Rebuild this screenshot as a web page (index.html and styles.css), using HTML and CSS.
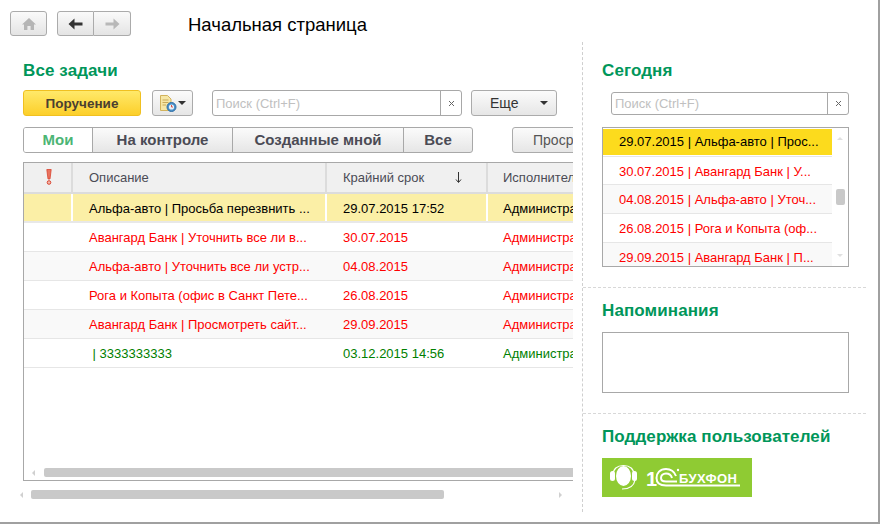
FILE: index.html
```html
<!DOCTYPE html>
<html lang="ru">
<head>
    <meta charset="UTF-8">
    <title>Начальная страница</title>
    <link rel="stylesheet" href="styles.css">
</head>
<body>
<div class="app">
    <div class="topbar">
        <button class="nav-btn home">
            <svg width="16" height="14" viewBox="0 0 16 14"><path d="M8 1 L15 7.5 H13 V13 H9.6 V9 H6.4 V13 H3 V7.5 H1 Z" fill="#b5b5b5"/></svg>
        </button>
        <div class="nav-group">
            <button class="nav-btn back">
                <svg width="15" height="12" viewBox="0 0 15 12"><path d="M6.5 0.5 V4.5 H14.5 V7.5 H6.5 V11.5 L0.5 6 Z" fill="#333"/></svg>
            </button>
            <button class="nav-btn fwd">
                <svg width="15" height="12" viewBox="0 0 15 12"><path d="M8.5 0.5 V4.5 H0.5 V7.5 H8.5 V11.5 L14.5 6 Z" fill="#b8b8b8"/></svg>
            </button>
        </div>
        <div class="page-title">Начальная страница</div>
    </div>

    <div class="main">
        <div class="left">
            <div class="left-inner">
                <h2 class="head">Все задачи</h2>
                <div class="toolbar">
                    <button class="btn primary">Поручение</button>
                    <button class="btn icon-btn">
                        <svg width="18" height="19" viewBox="0 0 18 19">
                            <path d="M1.5 1.5 H8.5 L12 5 V16.5 H1.5 Z" fill="#f6e7a6" stroke="#d2b35c"/>
                            <path d="M3.5 6 H9.5 M3.5 8.5 H9.5 M3.5 11 H7" stroke="#c9a95a"/>
                            <circle cx="12.5" cy="13" r="4.5" fill="#4a90c8" stroke="#2f6ea5"/>
                            <circle cx="12.5" cy="13" r="2.6" fill="#e8f2fa"/>
                            <path d="M12.5 11 V13 H14" fill="none" stroke="#d9534a"/>
                        </svg>
                        <span class="caret"></span>
                    </button>
                    <div class="search wide">
                        <span class="search-text">Поиск (Ctrl+F)</span>
                        <span class="search-x"><svg width="7" height="7" viewBox="0 0 7 7"><path d="M1 1 L6 6 M6 1 L1 6" stroke="#666"/></svg></span>
                    </div>
                    <button class="btn more"><span>Еще</span><span class="caret"></span></button>
                </div>
                <div class="filters">
                    <div class="tabs">
                        <div class="tab active t1">Мои</div>
                        <div class="tab t2">На контроле</div>
                        <div class="tab t3">Созданные мной</div>
                        <div class="tab t4">Все</div>
                    </div>
                    <button class="btn overdue">Просроченные</button>
                </div>
                <div class="table">
                    <div class="row header">
                        <div class="cell c1">
                            <svg class="mark" width="6" height="16" viewBox="0 0 6 16">
                                <path d="M0.8 0.5 H5.2 L4 10 H2 Z" fill="#e8735f" stroke="#d9432f" stroke-width="0.8"/>
                                <circle cx="3" cy="13.5" r="1.8" fill="#f4b9ac" stroke="#d9432f"/>
                            </svg>
                        </div>
                        <div class="cell c2">Описание</div>
                        <div class="cell c3 sort-cell">
                            <span>Крайний срок</span>
                            <svg class="sort" width="7" height="11" viewBox="0 0 7 11"><path d="M3.5 0 V10 M1 7.5 L3.5 10.5 L6 7.5" fill="none" stroke="#333"/></svg>
                        </div>
                        <div class="cell c4">Исполнитель</div>
                    </div>
                    <div class="row selected">
                        <div class="cell c1"></div>
                        <div class="cell c2">Альфа-авто | Просьба перезвнить ...</div>
                        <div class="cell c3">29.07.2015 17:52</div>
                        <div class="cell c4">Администратор</div>
                    </div>
                    <div class="row late">
                        <div class="cell c1"></div>
                        <div class="cell c2">Авангард Банк | Уточнить все ли в...</div>
                        <div class="cell c3">30.07.2015</div>
                        <div class="cell c4">Администратор</div>
                    </div>
                    <div class="row late alt">
                        <div class="cell c1"></div>
                        <div class="cell c2">Альфа-авто | Уточнить все ли устр...</div>
                        <div class="cell c3">04.08.2015</div>
                        <div class="cell c4">Администратор</div>
                    </div>
                    <div class="row late">
                        <div class="cell c1"></div>
                        <div class="cell c2">Рога и Копыта (офис в Санкт Пете...</div>
                        <div class="cell c3">26.08.2015</div>
                        <div class="cell c4">Администратор</div>
                    </div>
                    <div class="row late alt">
                        <div class="cell c1"></div>
                        <div class="cell c2">Авангард Банк | Просмотреть сайт...</div>
                        <div class="cell c3">29.09.2015</div>
                        <div class="cell c4">Администратор</div>
                    </div>
                    <div class="row future">
                        <div class="cell c1"></div>
                        <div class="cell c2">&nbsp;| 3333333333</div>
                        <div class="cell c3">03.12.2015 14:56</div>
                        <div class="cell c4">Администратор</div>
                    </div>
                    <div class="table-scroll">
                        <span class="arrow-l"></span>
                        <div class="thumb-h table-thumb"></div>
                    </div>
                </div>
            </div>
            <div class="outer-scroll">
                <span class="arrow-l"></span>
                <div class="thumb-h outer-thumb"></div>
                <span class="arrow-r"></span>
            </div>
        </div>

        <div class="right">
            <section class="block today">
                <h2 class="head">Сегодня</h2>
                <div class="search narrow">
                    <span class="search-text">Поиск (Ctrl+F)</span>
                    <span class="search-x"><svg width="7" height="7" viewBox="0 0 7 7"><path d="M1 1 L6 6 M6 1 L1 6" stroke="#666"/></svg></span>
                </div>
                <div class="list">
                    <div class="list-rows">
                        <div class="item current">29.07.2015 | Альфа-авто | Прос...</div>
                        <div class="item">30.07.2015 | Авангард Банк | У...</div>
                        <div class="item alt">04.08.2015 | Альфа-авто | Уточ...</div>
                        <div class="item">26.08.2015 | Рога и Копыта (оф...</div>
                        <div class="item alt">29.09.2015 | Авангард Банк | П...</div>
                    </div>
                    <div class="list-scroll">
                        <span class="arrow-u"></span>
                        <div class="thumb-v"></div>
                        <span class="arrow-d"></span>
                    </div>
                </div>
            </section>
            <section class="block reminders">
                <h2 class="head">Напоминания</h2>
                <div class="reminder-box"></div>
            </section>
            <section class="block support">
                <h2 class="head">Поддержка пользователей</h2>
                <svg class="buhfon" width="150" height="39" viewBox="0 0 150 39">
                    <rect width="150" height="39" fill="#8fcb33"/>
                    <ellipse cx="21.5" cy="18" rx="7.5" ry="10" fill="#fff"/>
                    <path d="M11 17 C11 11 15 7.5 21.5 7.5 C28 7.5 32 11 32 17" fill="none" stroke="#fff" stroke-width="1.2"/>
                    <rect x="8" y="13" width="5" height="10" rx="2.5" fill="#fff"/>
                    <rect x="30" y="13" width="5" height="10" rx="2.5" fill="#fff"/>
                    <path d="M33 22 C32 28 28 31 20 31" fill="none" stroke="#fff" stroke-width="1.2"/>
                    <text class="logo-one" x="44" y="28">1</text>
                    <path d="M74 18 C72 13 68 11 64 11 C58 11 54.5 15 54.5 20 C54.5 25 58 27.5 64 27.5 H138" fill="none" stroke="#fff" stroke-width="2"/>
                    <path d="M70 20 C69 16.5 67 15.5 64 15.5 C61 15.5 59 17.5 59 20 C59 22.5 61 23.5 64 23.5 H75" fill="none" stroke="#fff" stroke-width="2"/>
                    <circle cx="76" cy="12" r="1.2" fill="#fff"/>
                    <text class="logo-text" x="77" y="24.5">БУХФОН</text>
                </svg>
            </section>
        </div>
    </div>
</div>
</body>
</html>
```

FILE: styles.css
```css
* {
    margin: 0;
    padding: 0;
    box-sizing: border-box;
}

html, body {
    width: 100%;
    height: 100%;
    overflow: hidden;
    background-color: #fff;
}

body {
    font-family: "Liberation Sans", Arial, sans-serif;
    font-size: 13px;
}

button {
    font-family: inherit;
}

.app {
    width: 880px;
    height: 524px;
    border-right: 2px solid #a0a0a0;
    border-bottom: 2px solid #a0a0a0;
    display: flex;
    flex-direction: column;
}

/* top bar */
.topbar {
    height: 42px;
    padding: 11px 0 0 10px;
    display: flex;
    align-items: flex-start;
}

.nav-btn {
    height: 25px;
    border: 1px solid #ababab;
    border-radius: 3px;
    background: linear-gradient(#fafafa, #e4e4e4);
    display: flex;
    align-items: center;
    justify-content: center;
}

.home {
    width: 37px;
}

.nav-group {
    display: flex;
    margin-left: 10px;
}

.back, .fwd {
    width: 37px;
}

.back {
    border-radius: 3px 0 0 3px;
}

.fwd {
    border-left: 0;
    border-radius: 0 3px 3px 0;
}

.page-title {
    margin-left: 57px;
    font-size: 18.5px;
    line-height: 28px;
    color: #000;
}

/* columns */
.main {
    flex: 1;
    display: flex;
    align-items: flex-start;
    min-height: 0;
}

.left {
    width: 583px;
    height: 470px;
    border-right: 1px dashed #cfcfcf;
    padding-left: 23px;
}

.left-inner {
    width: 550px;
    overflow: hidden;
}

.head {
    font-size: 17px;
    font-weight: bold;
    line-height: 18px;
    color: #00965a;
    letter-spacing: 0.1px;
}

.left-inner .head {
    margin-top: 20px;
}

.toolbar {
    display: flex;
    margin-top: 10px;
    height: 26px;
}

.btn {
    height: 26px;
    border: 1px solid #ababab;
    border-radius: 3px;
    background: linear-gradient(#fbfbfb, #e6e6e6);
    font-size: 14px;
    color: #333;
    flex-shrink: 0;
}

.primary {
    width: 118px;
    font-size: 13.5px;
    border-color: #f0c020;
    background: linear-gradient(#ffe96a, #fccf2a);
    font-weight: bold;
    color: #4a4030;
}

.icon-btn {
    width: 41px;
    margin-left: 11px;
    display: flex;
    align-items: center;
    justify-content: center;
    gap: 1px;
}

.caret {
    display: inline-block;
    width: 0;
    height: 0;
    border-left: 4px solid transparent;
    border-right: 4px solid transparent;
    border-top: 4px solid #333;
}

.search {
    height: 26px;
    border: 1px solid #a8a8a8;
    border-radius: 3px;
    display: flex;
    align-items: center;
    background-color: #fff;
    flex-shrink: 0;
}

.search-text {
    flex: 1;
    padding-left: 3px;
    color: #c0c0c0;
}

.search-x {
    width: 21px;
    height: 100%;
    border-left: 1px solid #a8a8a8;
    display: flex;
    align-items: center;
    justify-content: center;
}

.wide {
    width: 250px;
    margin-left: 19px;
}

.more {
    width: 86px;
    margin-left: 9px;
    padding: 0 8px 0 18px;
    display: flex;
    align-items: center;
    justify-content: space-between;
}

.filters {
    display: flex;
    margin-top: 11px;
    height: 26px;
    white-space: nowrap;
}

.tabs {
    display: flex;
    flex-shrink: 0;
    height: 26px;
    border: 1px solid #a8a8a8;
    border-radius: 3px;
    overflow: hidden;
    background: linear-gradient(#fbfbfb, #e6e6e6);
}

.tab {
    font-size: 15px;
    font-weight: bold;
    line-height: 24px;
    text-align: center;
    color: #4b4b55;
    border-left: 1px solid #a8a8a8;
    flex-shrink: 0;
}

.tab.active {
    border-left: 0;
    background: #fff;
    color: #4cb575;
}

.t1 { width: 68px; }
.t2 { width: 140px; }
.t3 { width: 171px; }
.t4 { width: 69px; }

.overdue {
    width: 120px;
    margin-left: 39px;
    text-align: left;
    padding-left: 20px;
    color: #555;
}

/* table */
.table {
    width: 560px;
    height: 319px;
    margin-top: 9px;
    border: 1px solid #a8a8a8;
    border-right: 0;
    position: relative;
    overflow: hidden;
}

.row {
    display: flex;
    height: 29px;
    border-bottom: 1px solid #e6e6e6;
    line-height: 29px;
    white-space: nowrap;
}

.cell {
    overflow: hidden;
    flex-shrink: 0;
}

.c1 {
    width: 49px;
}

.c2 {
    width: 254px;
    padding-left: 16px;
}

.c3 {
    width: 161px;
    padding-left: 16px;
}

.c4 {
    width: 120px;
    padding-left: 15px;
}

.header {
    height: 31px;
    line-height: 29px;
    background-color: #f0f0f0;
    color: #4b4b55;
    border-bottom: 2px solid #dcdcdc;
}

.header .cell {
    border-right: 2px solid #dcdcdc;
}

.header .c4 {
    border-right: 0;
}

.mark {
    display: block;
    margin: 6px 0 0 22px;
}

.sort-cell {
    display: flex;
    align-items: center;
}

.sort {
    margin-left: 31px;
}

.selected {
    background-color: #fbefa6;
    color: #000;
    border-bottom: 2px solid #e8e8e8;
}

.selected .cell {
    border-right: 2px solid #fff;
}

.late {
    color: #f00;
}

.future {
    color: #008000;
}

.alt {
    background-color: #f9f9f9;
}

.table-scroll {
    position: absolute;
    left: 0;
    right: 0;
    bottom: 3px;
    height: 9px;
}

.thumb-h {
    position: absolute;
    top: 0;
    height: 9px;
    border-radius: 2px;
    background-color: #c9c9c9;
}

.table-thumb {
    left: 20px;
    right: 0;
}

.arrow-l, .arrow-r, .arrow-u, .arrow-d {
    position: absolute;
    width: 0;
    height: 0;
    border: 3px solid transparent;
}

.arrow-l {
    left: 8px;
    top: 2px;
    border-right-color: #d0d0d0;
    border-left: 0;
}

.arrow-r {
    right: 11px;
    top: 2px;
    border-left-color: #d0d0d0;
    border-right: 0;
}

.outer-scroll {
    position: relative;
    width: 550px;
    height: 10px;
    margin-top: 9px;
}

.outer-scroll .arrow-l {
    left: -3px;
}

.outer-thumb {
    left: 8px;
    width: 413px;
}

/* right side */
.right {
    width: 283px;
    flex-shrink: 0;
}

.block {
    padding-left: 19px;
    border-bottom: 1px dashed #d8d8d8;
}

.today {
    height: 246px;
    padding-top: 20px;
}

.narrow {
    width: 238px;
    height: 23px;
    margin: 12px 0 0 9px;
}

.list {
    width: 247px;
    height: 140px;
    margin-top: 12px;
    border: 1px solid #a8a8a8;
    display: flex;
    overflow: hidden;
}

.list-rows {
    width: 229px;
    flex-shrink: 0;
}

.item {
    height: 29px;
    padding-left: 16px;
    line-height: 29px;
    color: #f00;
    white-space: nowrap;
    border-bottom: 1px solid #e6e6e6;
    overflow: hidden;
}

.item.current {
    height: 26px;
    line-height: 26px;
    background-color: #fcdb1d;
    color: #000;
    border-bottom: 0;
    margin: 1px 0;
}

.item.current + .item {
    height: 29px;
    border-top: 1px solid #e6e6e6;
}

.item.alt {
    background-color: #f9f9f9;
}

.list-scroll {
    flex: 1;
    position: relative;
}

.thumb-v {
    position: absolute;
    left: 4px;
    top: 61px;
    width: 9px;
    height: 16px;
    border-radius: 2px;
    background-color: #c9c9c9;
}

.arrow-u {
    left: 5px;
    top: 9px;
    border-bottom-color: #e0e0e0;
    border-top: 0;
}

.arrow-d {
    left: 5px;
    top: 126px;
    border-top-color: #e0e0e0;
    border-bottom: 0;
}

.reminders {
    height: 126px;
    padding-top: 14px;
}

.reminder-box {
    width: 247px;
    height: 61px;
    margin-top: 12px;
    border: 1px solid #a8a8a8;
}

.support {
    border-bottom: 0;
    padding-top: 14px;
}

.buhfon {
    display: block;
    margin-top: 12px;
}

.logo-one {
    font-size: 20px;
    font-weight: bold;
    fill: #fff;
}

.logo-text {
    font-size: 13px;
    font-weight: bold;
    letter-spacing: 0.4px;
    fill: #fff;
}
```
